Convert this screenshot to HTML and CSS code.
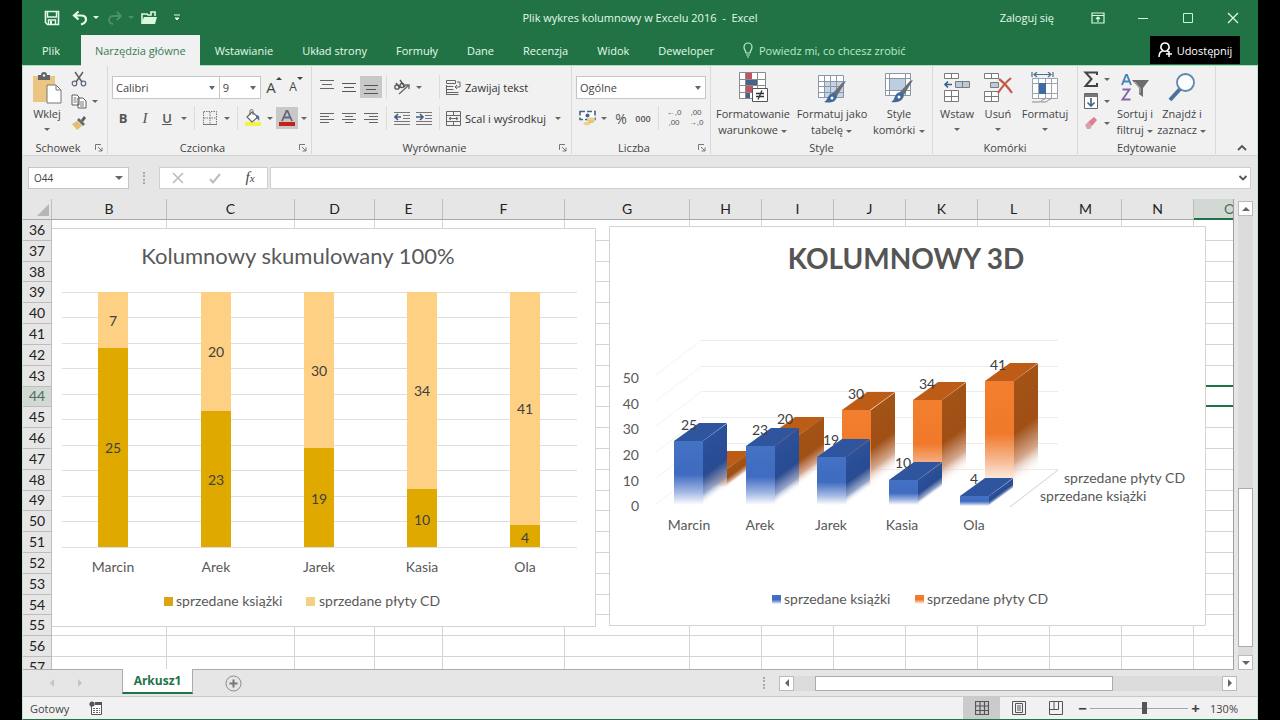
FILE: index.html
```html
<!DOCTYPE html>
<html lang="pl">
<head>
<meta charset="utf-8">
<title>Plik wykres kolumnowy w Excelu 2016 - Excel</title>
<link rel="stylesheet" href="styles.css">
</head>
<body>
<div class="window">
  <header class="titlebar">
    <div class="qat">
      <button class="qat-btn" aria-label="Zapisz"><svg width="16" height="16" viewBox="0 0 16 16"><path d="M1.5 1.5h13v13h-11l-2-2z" fill="none" stroke="#e4fbe9" stroke-width="1.6"/><path d="M3.500 2v5h9V2M4.500 14v-4h7v4" fill="none" stroke="#e4fbe9" stroke-width="1.400"/><path d="M6 11h2v3H6z" fill="#e4fbe9"/></svg></button>
      <button class="qat-btn undo" aria-label="Cofnij"><svg width="16" height="16" viewBox="0 0 16 16"><path d="M6.500 1.500 2 5.500l4.500 4M2 5.500h7c3 0 5 1.500 5 4s-2 4-5 5" fill="none" stroke="#e4fbe9" stroke-width="2.200"/></svg></button>
      <span class="drop light"></span>
      <button class="qat-btn redo" aria-label="Ponów"><svg width="16" height="16" viewBox="0 0 16 16"><path d="m10 2 4 4-4 4M14 6H6.500C3.500 6 2 7.500 2 10s1.500 3.500 4 4" fill="none" stroke="#4b9268" stroke-width="1.800"/></svg></button>
      <span class="drop faint"></span>
      <button class="qat-btn open" aria-label="Otwórz"><svg width="18" height="16" viewBox="0 0 18 16"><path d="M2 13V4h5l1 1h3V2h4v4" fill="none" stroke="#d9f8df" stroke-width="1.600"/><path d="M1 14 4 7h13l-2 7z" fill="#d9f8df"/></svg></button>
      <button class="qat-btn more" aria-label="Dostosuj"><svg width="8" height="8" viewBox="0 0 8 8"><path d="M1 1h6M2 4h4L4 6z" fill="#e4fbe9" stroke="#e4fbe9"/></svg></button>
    </div>
    <div class="doc-title">Plik wykres kolumnowy w Excelu 2016 &nbsp;- &nbsp;Excel</div>
    <div class="win-controls">
      <a class="login" href="#">Zaloguj się</a>
      <button aria-label="Opcje wstążki"><svg width="14" height="12" viewBox="0 0 14 12"><path d="M1 1h12v10H1zM1 3.500h12M7 10V5M5 7l2-2 2 2" fill="none" stroke="#d9f8e2" stroke-width="1.200"/></svg></button>
      <button aria-label="Minimalizuj"><svg width="12" height="12" viewBox="0 0 12 12"><path d="M1 6.500h10" stroke="#d9f8e2"/></svg></button>
      <button aria-label="Maksymalizuj"><svg width="12" height="12" viewBox="0 0 12 12"><path d="M1.500 1.500h9v9h-9z" fill="none" stroke="#c4f8d6"/></svg></button>
      <button aria-label="Zamknij"><svg width="12" height="12" viewBox="0 0 12 12"><path d="m1 1 10 10M11 1 1 11" stroke="#e4fbe9" stroke-width="1.200"/></svg></button>
    </div>
  </header>
  <nav class="tabs">
    <button class="tab">Plik</button>
    <button class="tab active">Narzędzia główne</button>
    <button class="tab">Wstawianie</button>
    <button class="tab">Układ strony</button>
    <button class="tab">Formuły</button>
    <button class="tab">Dane</button>
    <button class="tab">Recenzja</button>
    <button class="tab">Widok</button>
    <button class="tab">Deweloper</button>
    <button class="tell"><svg width="10" height="16" viewBox="0 0 10 16"><path d="M3 11C3 9 1 8 1 5a4 4 0 0 1 8 0c0 3-2 4-2 6zM3 13h4M4 15h2" fill="none" stroke="#b9ecc8" stroke-width="1.200"/></svg>Powiedz mi, co chcesz zrobić</button>
    <button class="share"><svg width="15" height="16" viewBox="0 0 15 16"><path d="M7 1a4 4 0 0 1 2.500 7.200C8 9.500 6 9.500 4.500 8.200A4 4 0 0 1 7 1zM1 15c0-3.500 1.500-5.500 4-6.200M9 8.800l2 1.200M11 9v6M8 12h6" fill="none" stroke="#fff" stroke-width="1.500"/></svg>Udostępnij</button>
  </nav>

  <section class="ribbon">
    <div class="group clipboard">
      <div class="body cols">
        <button class="big paste"><svg width="30" height="32" viewBox="0 0 30 32"><path d="M1 4h22v26H1z" fill="#ecc583"/><path d="M6 3h3a3 3 0 0 1 6 0h3v5H6z" fill="#646464"/><circle cx="12" cy="3.500" r="1.200" fill="#f1f1f1"/><path d="M15 13h9l5 5v13H15z" fill="#fff" stroke="#777"/><path d="M24 13v5h5" fill="none" stroke="#777"/></svg><span>Wklej</span><i class="drop"></i></button>
        <div class="stack">
          <button class="ib" aria-label="Wytnij"><svg width="16" height="16" viewBox="0 0 16 16"><path d="m4 1 7 10M12 1 5 11" stroke="#5c6064" stroke-width="1.500"/><circle cx="3.500" cy="12.500" r="2.300" fill="none" stroke="#5c6a78" stroke-width="1.200"/><circle cx="12.500" cy="12.500" r="2.300" fill="none" stroke="#5c6a78" stroke-width="1.200"/></svg></button>
          <div class="pair"><button class="ib" aria-label="Kopiuj"><svg width="16" height="16" viewBox="0 0 16 16"><path d="M1 2h5l2 2v8H1zM7 5h5l3 3v7H7z" fill="#fff" stroke="#5c5c5c"/><path d="M2.500 5h3M2.500 7h3M2.500 9h3M9 9h4M9 11h4M9 13h4" stroke="#777"/></svg></button><i class="drop"></i></div>
          <button class="ib" aria-label="Malarz formatów"><svg width="16" height="16" viewBox="0 0 16 16"><path d="m1 9 5-3 5 5-5 4z" fill="#e6bd74"/><path d="m6 5 2-2 6 6-2 2z" fill="#6a6a6a"/><path d="m10 5 3-4 2 2-3 4z" fill="#5a5a5a"/></svg></button>
        </div>
      </div>
      <div class="name with-launch">Schowek<svg class="launch" width="8" height="8" viewBox="0 0 8 8"><path d="M.5 6V.5H6M3 3l4 4M7 3.500V7H3.500" fill="none" stroke="#777"/></svg></div>
    </div>

    <div class="group font">
      <div class="body">
        <div class="line">
          <label class="combo w-font"><select aria-label="Czcionka"><option>Calibri</option></select></label><label class="combo w-size"><select aria-label="Rozmiar czcionki"><option>9</option></select></label>
          <button class="ib grow" aria-label="Zwiększ rozmiar"><span class="big-a">A</span><svg width="6" height="10" viewBox="0 0 6 10"><path d="m0 4 3-3 3 3z" fill="#444"/></svg></button>
          <button class="ib grow" aria-label="Zmniejsz rozmiar"><span class="small-a">A</span><svg width="6" height="10" viewBox="0 0 6 10"><path d="m0 1 3 3 3-3z" fill="#444"/></svg></button>
        </div>
        <div class="line">
          <button class="ib letter"><b>B</b></button><button class="ib letter serif"><i>I</i></button><button class="ib letter"><u>U</u></button><i class="drop"></i><i class="sep"></i>
          <button class="ib" aria-label="Obramowanie"><svg width="14" height="14" viewBox="0 0 14 14"><path d="M.5.5h13v13H.5zM7 1v12M1 7h12" fill="none" stroke="#777" stroke-dasharray="1.500 1"/><path d="M0 13.500h14" stroke="#777"/></svg></button><i class="drop"></i><i class="sep"></i>
          <button class="ib" aria-label="Kolor wypełnienia"><svg width="18" height="18" viewBox="0 0 18 18"><path d="M1 13h16v4H1z" fill="#f4f246"/><path d="m3 8 5-5 6 5-6 5z" fill="#fff" stroke="#666" stroke-width="1.200"/><path d="M6 6V2c0-2 3-2 3 0v4" fill="none" stroke="#666"/><path d="M12 6c3 0 4 2 3 6-1-2-2-3-3-3z" fill="#56718c"/></svg></button><i class="drop"></i>
          <button class="ib pressed" aria-label="Kolor czcionki"><svg width="18" height="18" viewBox="0 0 18 18"><path d="M4 12 8.500 2h1L14 12M6 8.500h6" fill="none" stroke="#667" stroke-width="1.800"/><path d="M1 13h16v4H1z" fill="#c4211d"/></svg></button><i class="drop"></i>
        </div>
      </div>
      <div class="name with-launch">Czcionka<svg class="launch" width="8" height="8" viewBox="0 0 8 8"><path d="M.5 6V.5H6M3 3l4 4M7 3.500V7H3.500" fill="none" stroke="#777"/></svg></div>
    </div>

    <div class="group align">
      <div class="body">
        <div class="line">
          <button class="ib" aria-label="Do góry"><svg width="14" height="14" viewBox="0 0 14 14"><path d="M0 .5h14M2 4.500h10M0 8.500h14" stroke="#666"/></svg></button><button class="ib" aria-label="Do środka"><svg width="14" height="14" viewBox="0 0 14 14"><path d="M0 3.500h14M2 7.500h10M0 11.500h14" stroke="#555"/></svg></button><button class="ib pressed" aria-label="Do dołu"><svg width="14" height="14" viewBox="0 0 14 14"><path d="M0 5.500h14M2 9.500h10M0 13.500h14" stroke="#555"/></svg></button><i class="sep"></i>
          <span class="two"><button class="ib" aria-label="Orientacja"><svg width="18" height="16" viewBox="0 0 18 16"><g fill="none" stroke="#555" stroke-width="1.300"><circle cx="4" cy="8" r="2.200"/><path d="m3 4 4 5M7 1l5 7"/><circle cx="9" cy="6.500" r="2"/><path d="M6 15 16 6M12 6h4v4" stroke="#666"/></g></svg></button><i class="drop"></i></span><i class="sep"></i>
          <button class="text-btn"><svg width="15" height="16" viewBox="0 0 15 16"><path d="M.5 1.500h9v3h-9zM.5 7.500h7M.5 10.500h7M.5 13.500h12M.5 15.500h12M.5 6v10M11 3h3v5H9M11 6 9 8l2 2" fill="none" stroke="#666"/></svg>Zawijaj tekst</button>
        </div>
        <div class="line">
          <button class="ib" aria-label="Do lewej"><svg width="14" height="12" viewBox="0 0 14 12"><path d="M0 1.500h14M0 4.500h9M0 7.500h14M0 10.500h9" stroke="#666"/></svg></button><button class="ib" aria-label="Wyśrodkuj"><svg width="14" height="12" viewBox="0 0 14 12"><path d="M0 1.500h14M3 4.500h8M0 7.500h14M3 10.500h8" stroke="#666"/></svg></button><button class="ib" aria-label="Do prawej"><svg width="14" height="12" viewBox="0 0 14 12"><path d="M0 1.500h14M5 4.500h9M0 7.500h14M5 10.500h9" stroke="#666"/></svg></button><i class="sep"></i>
          <span class="two"><button class="ib" aria-label="Zmniejsz wcięcie"><svg width="16" height="14" viewBox="0 0 16 14"><path d="M0 1.500h16M9 4.500h7M9 7.500h7M0 10.500h16M0 13.500h16" stroke="#777"/><path d="M1 6h6M4 3 1 6l3 3" fill="none" stroke="#3d5f86" stroke-width="1.600"/></svg></button><button class="ib" aria-label="Zwiększ wcięcie"><svg width="16" height="14" viewBox="0 0 16 14"><path d="M0 1.500h16M9 4.500h7M9 7.500h7M0 10.500h16M0 13.500h16" stroke="#777"/><path d="M0 6h6M4 3l3 3-3 3" fill="none" stroke="#3d5f86" stroke-width="1.600"/></svg></button></span><i class="sep"></i>
          <button class="text-btn"><svg width="15" height="15" viewBox="0 0 15 15"><path d="M.5.5h14v14H.5zM.5 4.500h14M.5 10.500h14M7.500 0v4M7.500 11v4M3 7.500h9M5 6 3 7.500 5 9M10 6l2 1.500L10 9" fill="none" stroke="#666"/></svg>Scal i wyśrodkuj</button><i class="drop last"></i>
        </div>
      </div>
      <div class="name with-launch">Wyrównanie<svg class="launch" width="8" height="8" viewBox="0 0 8 8"><path d="M.5 6V.5H6M3 3l4 4M7 3.500V7H3.500" fill="none" stroke="#777"/></svg></div>
    </div>

    <div class="group number">
      <div class="body">
        <div class="line"><label class="combo w-format"><select aria-label="Format liczb"><option>Ogólne</option></select></label></div>
        <div class="line">
          <button class="ib" aria-label="Format walutowy"><svg width="17" height="16" viewBox="0 0 17 16"><path d="M1 1.500h15v8H1z" fill="#fff" stroke="#46658a" stroke-width="1.600" stroke-dasharray="5 2"/><circle cx="8.500" cy="5.500" r="2" fill="#3f6696"/><ellipse cx="12" cy="9" rx="4" ry="1.800" fill="#edd28c"/><ellipse cx="8" cy="13.500" rx="3.500" ry="1.800" fill="#edd28c"/><ellipse cx="12" cy="11.500" rx="3" ry="1.500" fill="#e5c46f"/></svg></button><i class="drop"></i>
          <button class="ib pct">%</button><button class="ib zeros">000</button><i class="sep"></i>
          <button class="ib dec"><span>←,0</span><span>,00</span></button><button class="ib dec"><span>,00</span><span>→,0</span></button>
        </div>
      </div>
      <div class="name with-launch">Liczba<svg class="launch" width="8" height="8" viewBox="0 0 8 8"><path d="M.5 6V.5H6M3 3l4 4M7 3.500V7H3.500" fill="none" stroke="#777"/></svg></div>
    </div>

    <div class="group styles">
      <div class="body cols">
        <button class="big w80"><svg width="30" height="32" viewBox="0 0 30 32"><path d="M1 1h26v26H1z" fill="#fff"/><path d="M8 1h6v6H8zM8 14h7v6H8z" fill="#c05560"/><path d="M8 7h11v6H8zM8 20h4v6H8z" fill="#46618a"/><path d="M1.500.5h26v26h-26zM7.500 1v26M19.500 1v26M1 7.500h26M1 13.500h26M1 20.500h26" fill="none" stroke="#8a8a8a"/><path d="M14.500 16.500h15v13h-15z" fill="#fff" stroke="#555"/><path d="M18 21.500h8M18 24.500h8M24 18.500l-4 9" stroke="#333" stroke-width="1.300"/></svg><span>Formatowanie</span><span>warunkowe <i class="drop"></i></span></button>
        <button class="big w78"><svg width="32" height="32" viewBox="0 0 32 32"><path d="M2.500 3.500h25v22h-25z" fill="#fff"/><path d="M8 9h19v16H8z" fill="#c5d4e6"/><path d="M2.500 3.500h25v22h-25zM8.500 4v22M14.500 4v22M20.500 4v22M2 9.500h26M2 14.500h26M2 20.500h26" fill="none" stroke="#8b97a5"/><path d="m30 9-9 15-4-3 10-11z" fill="#6b6f75"/><path d="M17 21c3 0 5 3 3 6-2 4-7 4-12 3 4-1 3-8 9-9z" fill="#41689c"/><circle cx="16" cy="26" r="1.500" fill="#fff"/></svg><span>Formatuj jako</span><span>tabelę <i class="drop"></i></span></button>
        <button class="big w56"><svg width="32" height="32" viewBox="0 0 32 32"><path d="M2.500 1.500h25v22h-25z" fill="#fff"/><path d="M7 7h15v11H7z" fill="#bccfe0"/><path d="M2.500 1.500h25v22h-25zM6.500 2v22M22.500 2v22M2 6.500h26M2 18.500h26" fill="none" stroke="#8b97a5"/><path d="m30 8-9 15-4-3 10-11z" fill="#6b6f75"/><path d="M17 20c3 0 5 3 3 6-2 4-7 5-12 4 4-1 3-9 9-10z" fill="#41689c"/><circle cx="16" cy="25" r="1.500" fill="#fff"/></svg><span>Style</span><span>komórki <i class="drop"></i></span></button>
      </div>
      <div class="name">Style</div>
    </div>

    <div class="group cells">
      <div class="body cols">
        <button class="big w44"><svg width="28" height="32" viewBox="0 0 28 32"><path d="M1.500 1.500h14v5h-14zM8.500 2v5M1.500 18.500h14v11h-14zM8.500 19v11M1.500 24.500h14" fill="#fff" stroke="#7a7a7a"/><path d="M12.500 9.500h14v6h-14zM19.500 10v6" fill="#bccbd9" stroke="#7a7a7a"/><path d="M2 12.500h7M5 9.500l-3 3 3 3" fill="none" stroke="#34608e" stroke-width="1.600"/></svg><span>Wstaw</span><i class="drop"></i></button>
        <button class="big w38"><svg width="30" height="32" viewBox="0 0 30 32"><path d="M1.500 1.500h14v5h-14zM8.500 2v5M1.500 19.500h14v10h-14zM8.500 20v10M1.500 24.500h14" fill="#fff" stroke="#7a7a7a"/><path d="M7.500 10.500h8v5h-8z" fill="#bccbd9" stroke="#7a7a7a"/><path d="M16 7c4 3 9 8 13 14M28 6c-5 4-9 9-13 15" fill="none" stroke="#c35b4b" stroke-width="2.200"/></svg><span>Usuń</span><i class="drop"></i></button>
        <button class="big w56"><svg width="28" height="32" viewBox="0 0 28 32"><path d="M1 0v5M22 0v5M3 2.500h17M6 0 3 2.500 6 5M17 0l3 2.500L17 5" fill="none" stroke="#4a6f93" stroke-width="1.200"/><path d="M1.500 6.500h25v20h-25z" fill="#fff"/><path d="M1.500 6.500h25v20h-25zM7.500 7v20M14.500 7v20M20.500 7v20M1 11.500h26M1 21.500h26" fill="none" stroke="#9aa3ad"/><path d="M8 11h7v11H8z" fill="#3f6ba3"/><path d="M1 30h7c3 0 3-3 6-3M10 30h4c3 0 3-3 6-3" fill="none" stroke="#8a8a8a"/></svg><span>Formatuj</span><i class="drop"></i></button>
      </div>
      <div class="name">Komórki</div>
    </div>

    <div class="group editing">
      <div class="body cols">
        <div class="stack">
          <div class="pair"><button class="ib" aria-label="Autosumowanie"><svg width="16" height="17" viewBox="0 0 16 17"><path d="M14 4V1.500H2.500l6 6.500-6 7H14V12" fill="none" stroke="#444" stroke-width="2"/></svg></button><i class="drop"></i></div>
          <div class="pair"><button class="ib" aria-label="Wypełnij"><svg width="14" height="16" viewBox="0 0 14 16"><path d="M.5.5h13v15H.5z" fill="#fff" stroke="#666"/><path d="M1 1h12v3H1z" fill="#777"/><path d="M7 5v8M3.500 9.500 7 13l3.500-3.500" fill="none" stroke="#42688c" stroke-width="1.700"/></svg></button><i class="drop"></i></div>
          <div class="pair"><button class="ib" aria-label="Wyczyść"><svg width="14" height="14" viewBox="0 0 14 14"><path d="m1 9 3-3 4 4-2 3H3z" fill="#d8a0aa"/><path d="m4 6 6-5 3 3-5 6z" fill="#dc7f91"/></svg></button><i class="drop"></i></div>
        </div>
        <button class="big w42"><svg width="30" height="32" viewBox="0 0 30 32"><path d="m2 13 4-10h1l4 10M3.500 9.500h6" fill="none" stroke="#4a83b5" stroke-width="1.900"/><path d="M2.500 17.500h7l-7 10h8" fill="none" stroke="#8266ab" stroke-width="1.900"/><path d="M12 8h17l-6 8v9l-4-3v-6z" fill="#6c6c6c"/><path d="m15 10 5 6v5" fill="none" stroke="#bbb"/></svg><span>Sortuj i</span><span>filtruj <i class="drop"></i></span></button>
        <button class="big w52"><svg width="30" height="32" viewBox="0 0 30 32"><path d="M3 28 13 17" stroke="#4a719b" stroke-width="4"/><circle cx="18.500" cy="10.500" r="8.500" fill="#fcfdfe" stroke="#5f87ad" stroke-width="1.800"/></svg><span>Znajdź i</span><span>zaznacz <i class="drop"></i></span></button>
      </div>
      <div class="name">Edytowanie</div>
    </div>
    <button class="collapse" aria-label="Zwiń wstążkę"><svg width="10" height="8" viewBox="0 0 10 8"><path d="m1 6 4-4 4 4" fill="none" stroke="#555" stroke-width="1.800"/></svg></button>
  </section>

  <section class="formula-bar">
    <label class="combo name-box"><select aria-label="Pole nazwy"><option>O44</option></select></label>
    <span class="dots"></span>
    <div class="fx-box">
      <button aria-label="Anuluj"><svg width="12" height="12" viewBox="0 0 12 12"><path d="m1 1 10 10M11 1 1 11" stroke="#bcbcbc" stroke-width="1.600"/></svg></button>
      <button aria-label="Wpis"><svg width="12" height="12" viewBox="0 0 12 12"><path d="m1 7 3 3.500L11 2" fill="none" stroke="#bcbcbc" stroke-width="2"/></svg></button>
      <button class="fx"><i>f<small>x</small></i></button>
    </div>
    <div class="formula"><input type="text" aria-label="Pasek formuły"><svg width="10" height="8" viewBox="0 0 10 8"><path d="m1.500 2 3.500 3.500L8.500 2" fill="none" stroke="#555" stroke-width="1.800"/></svg></div>
  </section>

  <main class="workspace">
    <div class="sheet">
      <table class="grid">
        <colgroup><col class="c-row"><col class="c-b"><col class="c-c"><col class="c-d"><col class="c-e"><col class="c-f"><col class="c-g"><col class="c-n"><col class="c-n"><col class="c-n"><col class="c-n"><col class="c-n"><col class="c-n"><col class="c-n"><col class="c-n"></colgroup>
        <thead><tr><th class="corner"><svg width="12" height="12" viewBox="0 0 12 12"><path d="M12 0v12H0z" fill="#b5b5b5"/></svg></th><th>B</th><th>C</th><th>D</th><th>E</th><th>F</th><th>G</th><th>H</th><th>I</th><th>J</th><th>K</th><th>L</th><th>M</th><th>N</th><th class="sel">O</th></tr></thead>
        <tbody>
          <tr><th>36</th><td><td><td><td><td><td><td><td><td><td><td><td><td><td></tr>
          <tr><th>37</th><td><td><td><td><td><td><td><td><td><td><td><td><td><td></tr>
          <tr><th>38</th><td><td><td><td><td><td><td><td><td><td><td><td><td><td></tr>
          <tr><th>39</th><td><td><td><td><td><td><td><td><td><td><td><td><td><td></tr>
          <tr><th>40</th><td><td><td><td><td><td><td><td><td><td><td><td><td><td></tr>
          <tr><th>41</th><td><td><td><td><td><td><td><td><td><td><td><td><td><td></tr>
          <tr><th>42</th><td><td><td><td><td><td><td><td><td><td><td><td><td><td></tr>
          <tr><th>43</th><td><td><td><td><td><td><td><td><td><td><td><td><td><td></tr>
          <tr><th class="sel">44</th><td><td><td><td><td><td><td><td><td><td><td><td><td><td class="current"></tr>
          <tr><th>45</th><td><td><td><td><td><td><td><td><td><td><td><td><td><td></tr>
          <tr><th>46</th><td><td><td><td><td><td><td><td><td><td><td><td><td><td></tr>
          <tr><th>47</th><td><td><td><td><td><td><td><td><td><td><td><td><td><td></tr>
          <tr><th>48</th><td><td><td><td><td><td><td><td><td><td><td><td><td><td></tr>
          <tr><th>49</th><td><td><td><td><td><td><td><td><td><td><td><td><td><td></tr>
          <tr><th>50</th><td><td><td><td><td><td><td><td><td><td><td><td><td><td></tr>
          <tr><th>51</th><td><td><td><td><td><td><td><td><td><td><td><td><td><td></tr>
          <tr><th>52</th><td><td><td><td><td><td><td><td><td><td><td><td><td><td></tr>
          <tr><th>53</th><td><td><td><td><td><td><td><td><td><td><td><td><td><td></tr>
          <tr><th>54</th><td><td><td><td><td><td><td><td><td><td><td><td><td><td></tr>
          <tr><th>55</th><td><td><td><td><td><td><td><td><td><td><td><td><td><td></tr>
          <tr><th>56</th><td><td><td><td><td><td><td><td><td><td><td><td><td><td></tr>
          <tr><th>57</th><td><td><td><td><td><td><td><td><td><td><td><td><td><td></tr>
        </tbody>
      </table>

      <svg class="chart stacked" width="544" height="399" viewBox="52 228 544 399" role="img" aria-label="Kolumnowy skumulowany 100%">
        <path d="M52 228.500h543.500v398H52" fill="#fff" stroke="#d3d3d3"/>
        <text class="title" x="298" y="264">Kolumnowy skumulowany 100%</text>
        <path d="M62 292.500h515M62 317.500h515M62 343.500h515M62 368.500h515M62 394.500h515M62 419.500h515M62 445.500h515M62 470.500h515M62 496.500h515M62 521.500h515M62 547.500h515" stroke="#dedede"/>
        <g fill="#fdd083"><path d="M98 292h30v56H98zM201 292h30v119h-30zM304 292h30v156h-30zM407 292h30v197h-30zM510 292h30v233h-30z"/></g>
        <g fill="#e0a900"><path d="M98 348h30v199H98zM201 411h30v136h-30zM304 448h30v99h-30zM407 489h30v58h-30zM510 525h30v22h-30z"/></g>
        <g class="value"><text x="113" y="326">7</text><text x="216" y="357">20</text><text x="319" y="376">30</text><text x="422" y="396">34</text><text x="525" y="414">41</text><text x="113" y="453">25</text><text x="216" y="485">23</text><text x="319" y="504">19</text><text x="422" y="525">10</text><text x="525" y="543">4</text></g>
        <g class="axis"><text x="113" y="572">Marcin</text><text x="216" y="572">Arek</text><text x="319" y="572">Jarek</text><text x="422" y="572">Kasia</text><text x="525" y="572">Ola</text></g>
        <path d="M164 597h9v9h-9z" fill="#dba511"/><path d="M306 597h9v9h-9z" fill="#f3d083"/>
        <g class="key"><text x="176" y="606">sprzedane książki</text><text x="319" y="606">sprzedane płyty CD</text></g>
      </svg>

      <svg class="chart solid" width="597" height="400" viewBox="609 226 597 400" role="img" aria-label="KOLUMNOWY 3D">
        <defs>
          <linearGradient id="bf" x2="0" y2="1"><stop offset="0" stop-color="#4472c4"/><stop offset=".52" stop-color="#3f6bc0"/><stop offset=".8" stop-color="#a3b8e4"/><stop offset="1" stop-color="#fff"/></linearGradient>
          <linearGradient id="bs" x2="0" y2="1"><stop offset="0" stop-color="#2c519a"/><stop offset=".55" stop-color="#284b92"/><stop offset=".82" stop-color="#8296c0" stop-opacity=".85"/><stop offset="1" stop-color="#fff" stop-opacity="0"/></linearGradient>
          <linearGradient id="of" x2="0" y2="1"><stop offset="0" stop-color="#f27f2f"/><stop offset=".5" stop-color="#f0792a"/><stop offset=".75" stop-color="#f6b78f"/><stop offset="1" stop-color="#fff"/></linearGradient>
          <linearGradient id="os" x2="0" y2="1"><stop offset="0" stop-color="#a25315"/><stop offset=".5" stop-color="#a04f15"/><stop offset=".78" stop-color="#d5a88e"/><stop offset="1" stop-color="#fff" stop-opacity="0"/></linearGradient>
        </defs>
        <path d="M609.500 226.500h596v399h-596z" fill="#fff" stroke="#d3d3d3"/>
        <text class="title strong" x="906" y="269">KOLUMNOWY 3D</text>
        <path d="M702 340.500h356M702 366.500h356M702 391.500h356M702 417.500h356M702 443.500h356M702 469.500h356" fill="none" stroke="#ececec"/>
        <path d="m656 375 46-35M656 401l46-35M656 426l46-35M656 452l46-35M656 478l46-35M656 504l46-35" fill="none" stroke="#f3f3f3"/>
        <path d="m1010 507 48-37" stroke="#cfcfcf"/>
        <g transform="translate(698 469)"><path d="M0 0 25-18H54L29 0z" fill="#bd5c17"/><rect width="29" height="18" fill="url(#of)"/><rect transform="translate(29 0) skewY(-36)" width="25" height="18" fill="url(#os)"/></g>
        <g transform="translate(770 435)"><path d="M0 0 25-18H54L29 0z" fill="#bd5c17"/><rect width="29" height="51" fill="url(#of)"/><rect transform="translate(29 0) skewY(-36)" width="25" height="51" fill="url(#os)"/></g>
        <g transform="translate(842 410)"><path d="M0 0 25-18H53L28 0z" fill="#bd5c17"/><rect width="29" height="77" fill="url(#of)"/><rect transform="translate(29 0) skewY(-36)" width="24" height="77" fill="url(#os)"/></g>
        <g transform="translate(913 400)"><path d="M0 0 25-18H53L29 0z" fill="#bd5c17"/><rect width="29" height="87" fill="url(#of)"/><rect transform="translate(29 0) skewY(-36)" width="24" height="87" fill="url(#os)"/></g>
        <g transform="translate(985 381)"><path d="M0 0 25-18H53L29 0z" fill="#bd5c17"/><rect width="29" height="105" fill="url(#of)"/><rect transform="translate(29 0) skewY(-36)" width="24" height="105" fill="url(#os)"/></g>
        <g transform="translate(674 441)"><path d="M0 0 25-18H53L29 0z" fill="#2f559f"/><rect width="29" height="64" fill="url(#bf)"/><rect transform="translate(29 0) skewY(-36)" width="24" height="64" fill="url(#bs)"/></g>
        <g transform="translate(746 446)"><path d="M0 0 25-18H53L29 0z" fill="#2f559f"/><rect width="29" height="59" fill="url(#bf)"/><rect transform="translate(29 0) skewY(-36)" width="24" height="59" fill="url(#bs)"/></g>
        <g transform="translate(817 457)"><path d="M0 0 25-18H53L29 0z" fill="#2f559f"/><rect width="29" height="48" fill="url(#bf)"/><rect transform="translate(29 0) skewY(-36)" width="24" height="48" fill="url(#bs)"/></g>
        <g transform="translate(889 480)"><path d="M0 0 25-18H53L29 0z" fill="#2f559f"/><rect width="29" height="25" fill="url(#bf)"/><rect transform="translate(29 0) skewY(-36)" width="24" height="25" fill="url(#bs)"/></g>
        <g transform="translate(960 496)"><path d="M0 0 25-18H53L29 0z" fill="#2f559f"/><rect width="29" height="10" fill="url(#bf)"/><rect transform="translate(29 0) skewY(-36)" width="24" height="10" fill="url(#bs)"/></g>
        <g class="value"><text x="689" y="430">25</text><text x="760" y="435">23</text><text x="831" y="445">19</text><text x="903" y="468">10</text><text x="974" y="484">4</text><text x="785" y="424">20</text><text x="856" y="399">30</text><text x="927" y="389">34</text><text x="998" y="370">41</text></g>
        <g class="axis end"><text x="639" y="383">50</text><text x="639" y="409">40</text><text x="639" y="434">30</text><text x="639" y="460">20</text><text x="639" y="486">10</text><text x="639" y="511">0</text></g>
        <g class="axis"><text x="689" y="530">Marcin</text><text x="760" y="530">Arek</text><text x="831" y="530">Jarek</text><text x="902" y="530">Kasia</text><text x="974" y="530">Ola</text></g>
        <g class="key"><text x="1064" y="483">sprzedane płyty CD</text><text x="1040" y="501">sprzedane książki</text><text x="784" y="604">sprzedane książki</text><text x="927" y="604">sprzedane płyty CD</text></g>
        <path d="M772 595h9v9h-9z" fill="url(#bf)"/><path d="M915 595h9v9h-9z" fill="url(#of)"/>
      </svg>
    </div>
    <div class="vscroll">
      <button aria-label="W górę"><i class="tri up"></i></button>
      <div class="vtrack"><div class="vthumb"></div></div>
      <button aria-label="W dół"><i class="tri down"></i></button>
    </div>
  </main>

  <div class="sheet-bar">
    <div class="sheet-nav"><i class="tri left pale"></i><i class="tri right pale"></i></div>
    <button class="sheet-tab">Arkusz1</button>
    <button class="add" aria-label="Nowy arkusz"><svg width="17" height="17" viewBox="0 0 17 17"><circle cx="8.500" cy="8.500" r="7.500" fill="none" stroke="#8a8a8a"/><path d="M8.500 4.500v8M4.500 8.500h8" stroke="#777" stroke-width="2"/></svg></button>
    <span class="dots push"></span>
    <div class="hscroll">
      <button aria-label="W lewo"><i class="tri left"></i></button>
      <div class="htrack"><div class="hthumb"></div></div>
      <button aria-label="W prawo"><i class="tri right"></i></button>
    </div>
  </div>

  <footer class="status">
    <span>Gotowy</span>
    <svg class="macro" width="13" height="14" viewBox="0 0 13 14"><path d="M2.500 5v8.500h10v-11H6" fill="#fff" stroke="#555"/><path d="M6 1h7v3H6z" fill="#555"/><circle cx="3" cy="3" r="2.600" fill="#555"/><path d="M4 7.500h7M4 9.500h7M4 11.500h7" stroke="#666" stroke-dasharray="2 1"/></svg>
    <div class="views">
      <button class="on" aria-label="Normalny"><svg width="14" height="14" viewBox="0 0 14 14"><path d="M.5.500h13v13H.5zM5 1v12M9.500 1v12M1 5h12M1 9.500h12" fill="none" stroke="#555" stroke-width="1.200"/></svg></button>
      <button aria-label="Układ strony"><svg width="14" height="14" viewBox="0 0 14 14"><path d="M.5.500h13v13H.5zM3.500 2.500h7v9h-7zM5 5h4M5 7h4M5 9h4" fill="none" stroke="#555"/></svg></button>
      <button aria-label="Podgląd podziału"><svg width="14" height="14" viewBox="0 0 14 14"><path d="M.5.500h13v13H.5zM.5 8.500h9v-8M5 1v7" fill="none" stroke="#555"/></svg></button>
    </div>
    <div class="zoom"><button aria-label="Pomniejsz">−</button><input type="range" min="0" max="100" value="56" aria-label="Powiększenie"><button aria-label="Powiększ">+</button><span class="percent">130%</span></div>
  </footer>
</div>
</body>
</html>
```
FILE: styles.css
```css
* { box-sizing: border-box; }
body { margin: 0; background: #000; font-family: "Open Sans", "Noto Sans", sans-serif; font-size: 11px; color: #333; }
button { font: inherit; color: inherit; background: none; border: 0; padding: 0; margin: 0; }
svg { display: block; flex: none; }
.window { display: flex; flex-direction: column; height: 100vh; margin: 0 22px 0 22px; background: #e6e6e6; border: solid #bfe8cd; border-width: 0 1px; border-bottom: 1px solid #217346; }

.titlebar { display: grid; grid-template-columns: 1fr auto 1fr; align-items: center; height: 35px; background: #217346; color: #e4fbe9; margin: 0 -1px; }
.qat { display: flex; align-items: center; padding-left: 18px; }
.qat-btn { display: flex; align-items: center; justify-content: center; width: 24px; height: 20px; }
.qat .drop { width: 8px; }
.qat .undo { margin-left: 4px; }
.qat .redo { margin-left: 3px; }
.qat .open { margin-left: 2px; }
.qat .more { margin-left: 4px; }
.doc-title { white-space: nowrap; }
.win-controls { display: flex; justify-content: flex-end; align-items: center; padding-right: 3px; }
.win-controls button { display: flex; align-items: center; justify-content: center; width: 45px; height: 32px; }
.login { color: inherit; text-decoration: none; margin-right: 21px; }

.tabs { display: flex; gap: 1px; height: 31px; padding-left: 6px; background: #217346; color: #e4fbe9; margin: 0 -1px; border-bottom: 1px solid #a6e3bb; }
.tab { padding: 0 14px; font-weight: 500; }
.tab.active { background: #f1f1f1; color: #3a7a56; height: 31px; margin-left: 6px; }
.tell { display: flex; align-items: center; gap: 6px; margin-left: 14px; color: #b9ecc8; }
.share { display: flex; align-items: center; justify-content: center; gap: 4px; width: 90px; height: 28px; margin: 1px 18px 0 auto; background: #000; color: #fff; }

.ribbon { display: flex; height: 90px; background: #f1f1f1; border-bottom: 1px solid #d2d2d2; }
.group { display: flex; flex-direction: column; flex: none; padding: 6px 4px 0; border-right: 1px solid #d9d9d9; margin-bottom: 1px; }
.clipboard { width: 85px; } .font { width: 204px; } .align { width: 260px; } .number { width: 139px; }
.styles { width: 222px; } .cells { width: 145px; } .editing { width: 138px; }
.styles, .cells, .editing { padding: 6px 2px 0; }
.body { flex: 1; min-height: 0; display: flex; flex-direction: column; gap: 2px; }
.body.cols { flex-direction: row; gap: 0; }
.line { display: flex; align-items: center; height: 30px; }
.line + .line { height: 28px; }
.name { position: relative; flex: none; height: 13px; line-height: 13px; text-align: center; color: #444; }
.with-launch { padding-right: 14px; }
.launch { position: absolute; right: 0; top: 3px; }
.ib { display: flex; align-items: center; justify-content: center; flex: none; width: 22px; height: 22px; color: #555; }
.pressed { background: #c8c8c8; }
.drop { display: inline-block; flex: none; width: 12px; height: 3px; }
.drop::before { content: ""; display: block; width: 0; margin: 0 auto; border: 3px solid transparent; border-top-color: #666; border-bottom: 0; }
.drop.light::before { border-top-color: #e4fbe9; }
.drop.faint::before { border-top-color: #4b9268; }
.last { margin-left: 6px; }
.sep { flex: none; width: 1px; height: 24px; margin: 0 4px; background: #dcdcdc; }
.two { display: flex; align-items: center; width: 44px; }
.stack { display: flex; flex-direction: column; margin-top: -4px; }
.pair { display: flex; align-items: center; }
.paste { width: 40px; }
.clipboard .stack { padding-left: 1px; }
.editing .stack { width: 34px; }
.stack .drop { width: 10px; }
.big { display: flex; flex-direction: column; align-items: center; flex: none; height: 66px; line-height: 16px; white-space: nowrap; color: #444; }
.big svg { margin-bottom: 2px; }
.big > .drop { margin-top: 6px; }
.big span .drop { width: 7px; vertical-align: middle; }
.w80 { width: 80px; } .w78 { width: 78px; } .w56 { width: 56px; } .w44 { width: 44px; } .w38 { width: 38px; } .w42 { width: 42px; } .w52 { width: 52px; }
.text-btn { display: flex; align-items: center; gap: 4px; white-space: nowrap; padding-left: 2px; }
.grow { align-items: flex-start; }
.big-a, .small-a { line-height: 22px; font-size: 15px; color: #444; }
.small-a { font-size: 12px; }
.letter { font-size: 13px; }
.serif { font-family: "Liberation Serif", serif; font-size: 15px; }
.letter u { font-weight: 600; }
.pct { font-size: 14px; }
.zeros { font-size: 9px; font-weight: 600; }
.dec { flex-direction: column; font-family: "Liberation Sans", sans-serif; font-size: 8px; line-height: 10px; }

.combo { position: relative; display: block; height: 23px; background: #fff; border: 1px solid #c6c6c6; }
.combo select { appearance: none; width: 100%; height: 100%; padding: 0 3px; border: 0; background: none; color: #444; font: inherit; }
.combo::after { content: ""; position: absolute; right: 4px; top: 9px; border: 3px solid transparent; border-top: 4px solid #666; border-bottom: 0; pointer-events: none; }
.w-font { width: 110px; } .w-size { width: 43px; margin-left: -1px; margin-right: 2px; } .w-format { width: 130px; }
.collapse { margin: auto 10px 3px auto; }

.formula-bar { display: flex; align-items: center; height: 43px; padding: 0 6px 0 5px; }
.name-box { width: 101px; height: 22px; }
.name-box::after { border-width: 4px 4px 0; right: 5px; top: 8px; }
.name-box select { padding: 0 5px; font-size: 10px; }
.dots { width: 1px; height: 12px; margin: 0 14px; border-left: 2px dotted #aaa; }
.fx-box { display: flex; align-items: center; justify-content: space-around; width: 109px; height: 22px; background: #fff; border: 1px solid #cfcfcf; }
.fx { font-family: "Liberation Serif", serif; font-size: 15px; line-height: 18px; color: #444; }
.fx small { font-size: 11px; }
.formula { flex: 1; display: flex; align-items: center; height: 22px; margin-left: 2px; padding-right: 2px; background: #fff; border: 1px solid #cfcfcf; }
.formula input { flex: 1; border: 0; background: none; min-width: 0; }

.workspace { flex: 1; min-height: 0; display: flex; }
.sheet { position: relative; flex: 1; min-width: 0; overflow: hidden; background: #fff; border-right: 1px solid #9f9f9f; border-bottom: 1px solid #ababab; }
.grid { table-layout: fixed; width: 1243px; height: calc(100% + 9px); border-spacing: 0; font-family: Lato, "Open Sans", sans-serif; font-size: 14px; color: #222; }
.grid th, .grid td { padding: 0; line-height: 16px; font-weight: 400; }
.grid td { border: solid #d4d4d4; border-width: 0 1px 1px 0; }
.grid th { background: #e6e6e6; border: solid #bdbdbd; border-width: 0 1px 1px 0; }
.grid thead th { height: 21px; border-bottom-color: #a6a6a6; }
.grid .corner svg { margin: 2px 2px 0 auto; }
.grid th.sel { background: #d2d8d4; color: #4a6f5a; }
.grid thead th.sel { border-bottom: 2px solid #217346; }
.grid td.current { border-bottom: 2px solid #217346; box-shadow: 0 -2px #217346; }
.c-row { width: 29px; } .c-b { width: 115px; } .c-c { width: 128px; } .c-d { width: 80px; } .c-e { width: 68px; } .c-f { width: 122px; } .c-g { width: 125px; } .c-n { width: 72px; }
.chart { position: absolute; font-family: Lato, "Open Sans", sans-serif; font-size: 14px; }
.stacked { left: 29px; top: 29px; }
.solid { left: 586px; top: 27px; }
.chart .title { font-size: 22px; fill: #595959; text-anchor: middle; }
.chart .strong { font-size: 28px; font-weight: 700; fill: #555; }
.value { text-anchor: middle; fill: #404040; }
.axis { text-anchor: middle; fill: #595959; }
.end { text-anchor: end; }
.key { fill: #595959; }

.vscroll { display: flex; flex-direction: column; width: 15px; margin: 2px 4px 0 4px; }
.vscroll button, .hscroll button { display: flex; align-items: center; justify-content: center; flex: none; width: 15px; height: 15px; background: #fff; border: 1px solid #bbb; }
.vtrack { flex: 1; display: flex; align-items: flex-end; background: #dcdcdc; padding-bottom: 8px; }
.vthumb { width: 15px; height: 37%; background: #fff; border: 1px solid #ababab; }
.tri { border: 4px solid transparent; }
.up { border-bottom-color: #666; border-top: 0; }
.down { border-top-color: #666; border-bottom: 0; }
.left { border-right-color: #666; border-left: 0; }
.right { border-left-color: #666; border-right: 0; }
.left.pale { border-right-color: #c4c4c4; }
.right.pale { border-left-color: #c4c4c4; }

.sheet-bar { display: flex; align-items: center; height: 27px; border-bottom: 1px solid #c9c9c9; }
.sheet-nav { display: flex; gap: 24px; width: 99px; padding-left: 27px; }
.sheet-tab { align-self: flex-start; width: 71px; height: 25px; margin-top: -1px; background: #fff; border: solid #ababab; border-width: 0 1px; border-bottom: 2px solid #217346; color: #217346; font-size: 12px; font-weight: 700; position: relative; }
.add { margin-left: 32px; }
.push { margin-left: auto; }
.hscroll { display: flex; width: 458px; margin-right: 20px; }
.htrack { flex: 1; background: #dcdcdc; padding: 0 109px 0 21px; }
.hthumb { height: 15px; background: #fff; border: 1px solid #ababab; }

.status { display: flex; align-items: center; height: 22px; padding: 0 19px 0 7px; background: #f1f1f1; color: #444; }
.macro { margin-left: 20px; }
.views { display: flex; align-self: stretch; margin-left: auto; }
.views button { display: flex; align-items: center; justify-content: center; width: 37px; }
.views .on { background: #cbcbcb; }
.zoom { display: flex; align-items: center; gap: 3px; margin-left: 4px; }
.zoom button { width: 9px; font-size: 15px; font-weight: 700; line-height: 16px; }
.zoom input { appearance: none; width: 98px; height: 14px; margin: 0; background: linear-gradient(#a6a6a6, #a6a6a6) center / 100% 1px no-repeat; }
.zoom input::-webkit-slider-thumb { appearance: none; width: 5px; height: 12px; background: #555; }
.percent { margin-left: 7px; }
```
